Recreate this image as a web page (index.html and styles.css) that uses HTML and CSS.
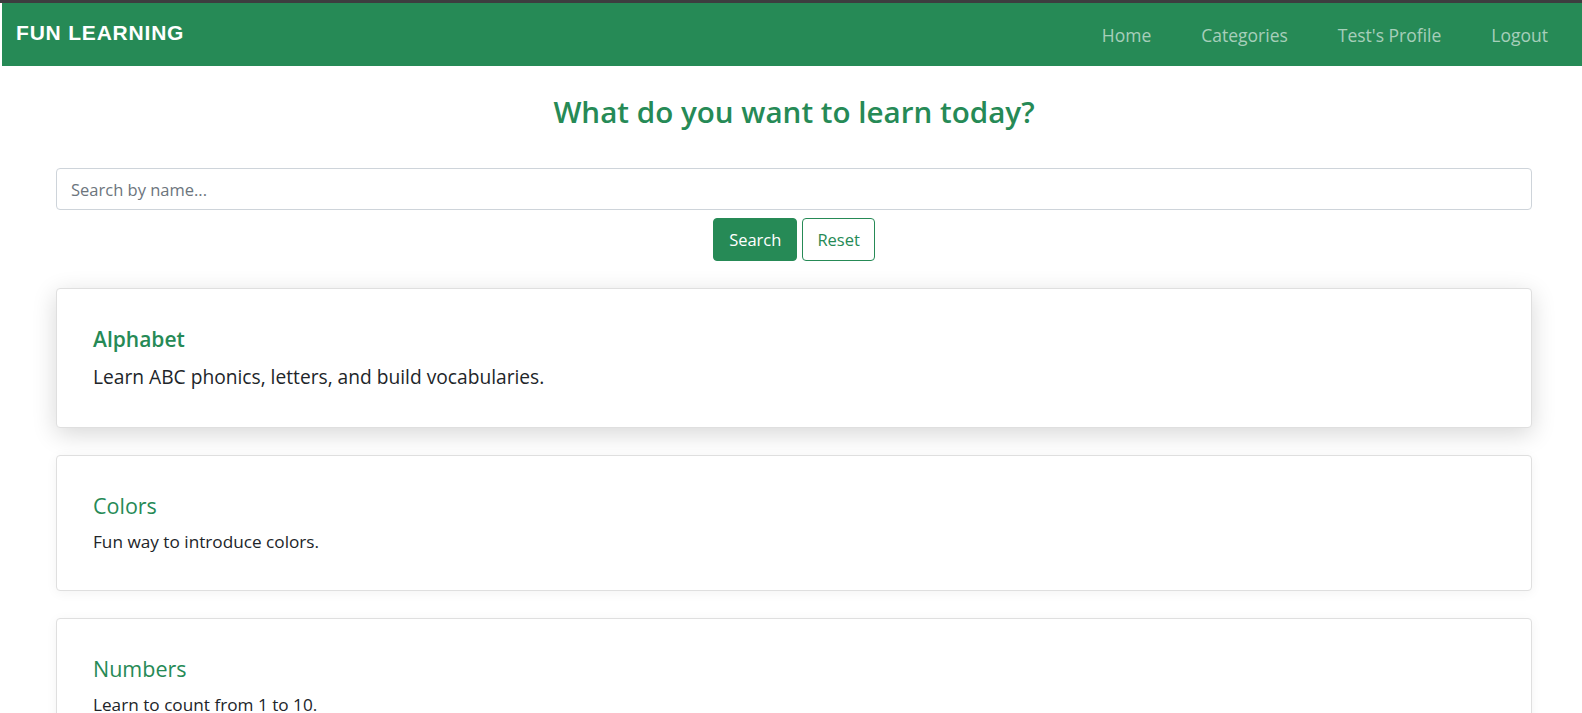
FILE: index.html
```html
<!DOCTYPE html>
<html lang="en">
<head>
<meta charset="utf-8">
<title>Fun Learning</title>
<link rel="stylesheet" href="styles.css">
</head>
<body>
<div class="topline"></div>
<nav class="navbar">
  <a class="brand" href="#">FUN LEARNING</a>
  <ul class="nav-links">
    <li><a href="#">Home</a></li>
    <li><a href="#">Categories</a></li>
    <li><a href="#">Test's Profile</a></li>
    <li><a href="#">Logout</a></li>
  </ul>
</nav>
<main class="container">
  <h1 class="page-title">What do you want to learn today?</h1>
  <form class="search-form">
    <input class="search-input" type="text" placeholder="Search by name...">
    <div class="search-actions">
      <button type="button" class="btn btn-primary">Search</button>
      <button type="button" class="btn btn-outline">Reset</button>
    </div>
  </form>
  <div class="card-list">
    <div class="card card-active">
      <h2 class="card-title">Alphabet</h2>
      <p class="card-text">Learn ABC phonics, letters, and build vocabularies.</p>
    </div>
    <div class="card">
      <h2 class="card-title">Colors</h2>
      <p class="card-text">Fun way to introduce colors.</p>
    </div>
    <div class="card">
      <h2 class="card-title">Numbers</h2>
      <p class="card-text">Learn to count from 1 to 10.</p>
    </div>
  </div>
</main>
</body>
</html>
```
FILE: styles.css
```css
* { box-sizing: border-box; }
html, body { margin: 0; padding: 0; background: #fff; }
body {
  font-family: "Open Sans", "Lato", sans-serif;
  color: #212529;
  overflow: hidden;
}
.topline { height: 3px; background: #3d3d3f; }
.navbar {
  margin-left: 2px;
  height: 63px;
  background: #268a56;
  display: flex;
  align-items: center;
  justify-content: space-between;
  padding: 0 9px 0 14px;
}
.brand {
  font-family: "Liberation Sans", Arial, sans-serif;
  font-weight: bold;
  font-size: 21px;
  letter-spacing: 0.8px;
  color: #fff;
  text-decoration: none;
  margin-top: -3px;
}
.nav-links {
  list-style: none;
  margin: 0;
  padding: 0;
  display: flex;
}
.nav-links a {
  display: block;
  padding: 8px 25px;
  color: rgba(255,255,255,0.6);
  text-decoration: none;
  font-size: 17.5px;
}
.container {
  margin: 0 50px 0 56px;
}
.page-title {
  margin: 26px 0 36px;
  text-align: center;
  color: #268a56;
  font-size: 29.6px;
  font-weight: 600;
  line-height: 40px;
}
.search-form { display: flex; flex-direction: column; align-items: center; }
.search-input {
  width: 100%;
  height: 42px;
  border: 1px solid #ced4da;
  border-radius: 4px;
  padding: 0 14px;
  font-family: inherit;
  font-size: 16.5px;
  color: #212529;
}
.search-input::placeholder { color: #6c757d; }
.search-actions {
  display: flex;
  gap: 5px;
  margin-top: 8px;
}
.btn {
  height: 43px;
  padding: 0 15px;
  border-radius: 4px;
  font-family: inherit;
  font-size: 16.5px;
  border: 1px solid #268a56;
  cursor: pointer;
}
.btn-primary { background: #268a56; color: #fff; }
.btn-outline { background: #fff; color: #268a56; padding: 0 14px; }
.card-list {
  margin-top: 27px;
  display: flex;
  flex-direction: column;
  gap: 27px;
}
.card {
  border: 1px solid #dfdfdf;
  border-radius: 4px;
  padding: 36px 36px 35px;
  background: #fff;
  box-shadow: 0 2px 12px rgba(0,0,0,0.05);
}
.card-active {
  box-shadow: 0 6px 24px rgba(0,0,0,0.16);
  padding: 36px 36px 37px;
}
.card-title {
  margin: 0 0 9px;
  color: #268a56;
  font-size: 21.5px;
  font-weight: normal;
  line-height: 28px;
}
.card-active .card-title { font-weight: 600; font-size: 21px; margin-bottom: 11px; }
.card-text {
  margin: 0;
  font-size: 17.2px;
  line-height: 26px;
}
.card-active .card-text { font-size: 19.2px; }
```
